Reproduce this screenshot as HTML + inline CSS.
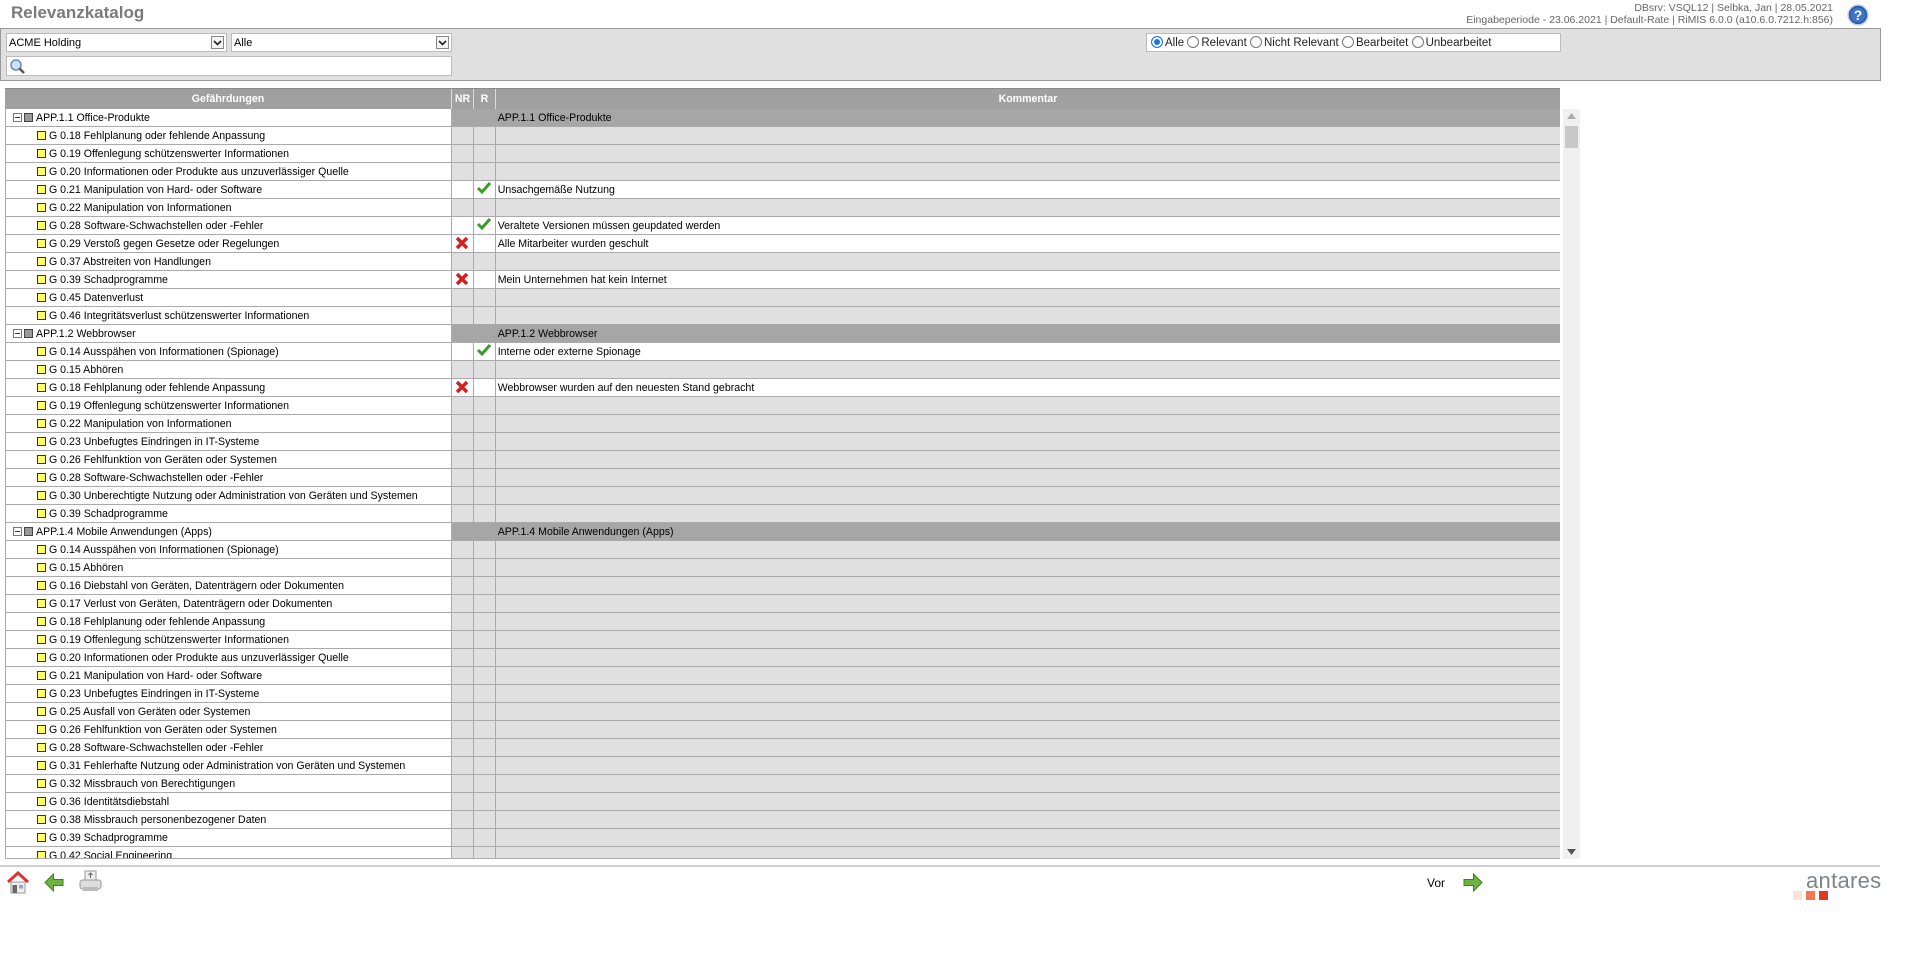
<!DOCTYPE html>
<html><head><meta charset="utf-8"><style>
*{box-sizing:border-box;margin:0;padding:0}
body{width:1920px;height:969px;background:#fff;font-family:"Liberation Sans",Arial,sans-serif;font-size:10.6px;color:#000;position:relative;overflow:hidden}
.abs{position:absolute}
#title{left:11px;top:3px;font-size:17px;font-weight:bold;color:#7a7a7a}
#info{right:87px;top:2px;text-align:right;color:#666;font-size:10.5px;line-height:12px}
#panel{left:0;top:28px;width:1881px;height:53px;background:#e0e0e0;border:1px solid #999}
.sel{position:absolute;height:19px;background:#fff;border:1px solid #bbb;font-size:11px;padding:3px 2px}
.sel .ar{position:absolute;right:2px;top:2px;width:13px;height:13px;border:1px solid #888;background:#f4f4f4}
.radios{position:absolute;left:1145px;top:4px;width:415px;height:19px;background:#fff;border:1px solid #bbb;font-size:11.5px;padding:2px 4px;white-space:nowrap;color:#222}
.rb{display:inline-block;width:12px;height:12px;border:1px solid #777;border-radius:50%;vertical-align:-2px;margin-right:2px;background:#fff}
.rb.on{border-color:#1a73e8;box-shadow:inset 0 0 0 2px #fff;background:#1a73e8}
#hdr{left:5px;top:88px;width:1555px;height:21px;background:#a0a0a0;color:#fff;font-weight:bold;display:flex;border-top:1px solid #888}
#hdr div{text-align:center;line-height:20px;border-right:1px solid #ddd}
#rows{left:5px;top:109px;width:1555px;height:750px;overflow:hidden;border-left:1px solid #aaa;border-bottom:1px solid #aaa}
.r{display:flex;height:18px;border-bottom:1px solid #aaa;line-height:19px}
.n{width:446px;background:#fff;border-right:1px solid #aaa;position:relative;white-space:nowrap}
.c{width:22px;background:#e0e0e0;border-right:1px solid #aaa;position:relative;text-align:center;line-height:17px}
.k{width:1065px;background:#e0e0e0;padding-left:2px}
.r.g .c,.r.g .k{background:#a6a6a6}
.r.g .c{border-right-color:#a6a6a6}
.r.f .c,.r.f .k{background:#fff}
.cb{position:absolute;left:31px;top:4px;width:9px;height:9px;background:#ffff66;border:1px solid #333}
.it{position:absolute;left:43px}
.pm{position:absolute;left:7px;top:4px;width:9px;height:9px;border:1px solid #777;background:#fff}
.pm:after{content:"";position:absolute;left:1px;top:3px;width:5px;height:1px;background:#333}
.gs{position:absolute;left:18px;top:4px;width:9px;height:9px;background:#999;border:1px solid #444}
.gt{position:absolute;left:30px}
#sb{left:1563px;top:109px;width:17px;height:750px;background:#f0f0f0}
#ft{left:0;top:865px;width:1880px;height:2px;background:#d0d0d0}
</style></head><body>
<div id="title" class="abs">Relevanzkatalog</div>
<div id="info" class="abs">DBsrv: VSQL12 | Selbka, Jan | 28.05.2021<br>Eingabeperiode - 23.06.2021 | Default-Rate | RiMIS 6.0.0 (a10.6.0.7212.h:856)</div>
<svg class="abs" style="left:1847px;top:4px" width="22" height="22" viewBox="0 0 22 22"><circle cx="11" cy="11" r="10" fill="#2a5aa8" stroke="#c9d6ea" stroke-width="1.5"/><circle cx="11" cy="11" r="7.5" fill="#3e74c4"/><text x="11" y="16" font-family="Liberation Sans" font-weight="bold" font-size="14" fill="#fff" text-anchor="middle">?</text></svg>
<div id="panel" class="abs">
 <div class="sel" style="left:5px;top:4px;width:221px">ACME Holding<div class="ar"><svg width="11" height="11"><path d="M2 4l3.5 3.5L9 4" stroke="#222" stroke-width="1.6" fill="none"/></svg></div></div>
 <div class="sel" style="left:230px;top:4px;width:221px">Alle<div class="ar"><svg width="11" height="11"><path d="M2 4l3.5 3.5L9 4" stroke="#222" stroke-width="1.6" fill="none"/></svg></div></div>
 <div class="sel" style="left:5px;top:27px;width:446px;height:20px"><svg style="position:absolute;left:2px;top:1px" width="17" height="17"><circle cx="7" cy="7" r="5" fill="#cfe0f4" stroke="#6a8db5" stroke-width="1.6"/><path d="M10.5 10.5l4.5 4.5" stroke="#556" stroke-width="2.5"/></svg></div>
 <div class="radios"><span class="rb on"></span>Alle <span class="rb"></span>Relevant <span class="rb"></span>Nicht Relevant <span class="rb"></span>Bearbeitet <span class="rb"></span>Unbearbeitet</div>
</div>
<div id="hdr" class="abs"><div style="width:447px">Gefährdungen</div><div style="width:22px">NR</div><div style="width:22px">R</div><div style="width:1064px;border:0">Kommentar</div></div>
<div id="rows" class="abs">
<div class="r g"><div class="n"><span class="pm"></span><span class="gs"></span><span class="gt">APP.1.1 Office-Produkte</span></div><div class="c"></div><div class="c"></div><div class="k">APP.1.1 Office-Produkte</div></div>
<div class="r"><div class="n"><span class="cb"></span><span class="it">G 0.18 Fehlplanung oder fehlende Anpassung</span></div><div class="c"></div><div class="c"></div><div class="k"></div></div>
<div class="r"><div class="n"><span class="cb"></span><span class="it">G 0.19 Offenlegung schützenswerter Informationen</span></div><div class="c"></div><div class="c"></div><div class="k"></div></div>
<div class="r"><div class="n"><span class="cb"></span><span class="it">G 0.20 Informationen oder Produkte aus unzuverlässiger Quelle</span></div><div class="c"></div><div class="c"></div><div class="k"></div></div>
<div class="r f"><div class="n"><span class="cb"></span><span class="it">G 0.21 Manipulation von Hard- oder Software</span></div><div class="c"></div><div class="c"><svg width="16" height="14"><path d="M2 7l4 4 8-9" stroke="#3a9a2a" stroke-width="3" fill="none"/></svg></div><div class="k">Unsachgemäße Nutzung</div></div>
<div class="r"><div class="n"><span class="cb"></span><span class="it">G 0.22 Manipulation von Informationen</span></div><div class="c"></div><div class="c"></div><div class="k"></div></div>
<div class="r f"><div class="n"><span class="cb"></span><span class="it">G 0.28 Software-Schwachstellen oder -Fehler</span></div><div class="c"></div><div class="c"><svg width="16" height="14"><path d="M2 7l4 4 8-9" stroke="#3a9a2a" stroke-width="3" fill="none"/></svg></div><div class="k">Veraltete Versionen müssen geupdated werden</div></div>
<div class="r f"><div class="n"><span class="cb"></span><span class="it">G 0.29 Verstoß gegen Gesetze oder Regelungen</span></div><div class="c"><svg width="16" height="16"><path d="M3 3l10 10M13 3L3 13" stroke="#d42020" stroke-width="3.5"/></svg></div><div class="c"></div><div class="k">Alle Mitarbeiter wurden geschult</div></div>
<div class="r"><div class="n"><span class="cb"></span><span class="it">G 0.37 Abstreiten von Handlungen</span></div><div class="c"></div><div class="c"></div><div class="k"></div></div>
<div class="r f"><div class="n"><span class="cb"></span><span class="it">G 0.39 Schadprogramme</span></div><div class="c"><svg width="16" height="16"><path d="M3 3l10 10M13 3L3 13" stroke="#d42020" stroke-width="3.5"/></svg></div><div class="c"></div><div class="k">Mein Unternehmen hat kein Internet</div></div>
<div class="r"><div class="n"><span class="cb"></span><span class="it">G 0.45 Datenverlust</span></div><div class="c"></div><div class="c"></div><div class="k"></div></div>
<div class="r"><div class="n"><span class="cb"></span><span class="it">G 0.46 Integritätsverlust schützenswerter Informationen</span></div><div class="c"></div><div class="c"></div><div class="k"></div></div>
<div class="r g"><div class="n"><span class="pm"></span><span class="gs"></span><span class="gt">APP.1.2 Webbrowser</span></div><div class="c"></div><div class="c"></div><div class="k">APP.1.2 Webbrowser</div></div>
<div class="r f"><div class="n"><span class="cb"></span><span class="it">G 0.14 Ausspähen von Informationen (Spionage)</span></div><div class="c"></div><div class="c"><svg width="16" height="14"><path d="M2 7l4 4 8-9" stroke="#3a9a2a" stroke-width="3" fill="none"/></svg></div><div class="k">Interne oder externe Spionage</div></div>
<div class="r"><div class="n"><span class="cb"></span><span class="it">G 0.15 Abhören</span></div><div class="c"></div><div class="c"></div><div class="k"></div></div>
<div class="r f"><div class="n"><span class="cb"></span><span class="it">G 0.18 Fehlplanung oder fehlende Anpassung</span></div><div class="c"><svg width="16" height="16"><path d="M3 3l10 10M13 3L3 13" stroke="#d42020" stroke-width="3.5"/></svg></div><div class="c"></div><div class="k">Webbrowser wurden auf den neuesten Stand gebracht</div></div>
<div class="r"><div class="n"><span class="cb"></span><span class="it">G 0.19 Offenlegung schützenswerter Informationen</span></div><div class="c"></div><div class="c"></div><div class="k"></div></div>
<div class="r"><div class="n"><span class="cb"></span><span class="it">G 0.22 Manipulation von Informationen</span></div><div class="c"></div><div class="c"></div><div class="k"></div></div>
<div class="r"><div class="n"><span class="cb"></span><span class="it">G 0.23 Unbefugtes Eindringen in IT-Systeme</span></div><div class="c"></div><div class="c"></div><div class="k"></div></div>
<div class="r"><div class="n"><span class="cb"></span><span class="it">G 0.26 Fehlfunktion von Geräten oder Systemen</span></div><div class="c"></div><div class="c"></div><div class="k"></div></div>
<div class="r"><div class="n"><span class="cb"></span><span class="it">G 0.28 Software-Schwachstellen oder -Fehler</span></div><div class="c"></div><div class="c"></div><div class="k"></div></div>
<div class="r"><div class="n"><span class="cb"></span><span class="it">G 0.30 Unberechtigte Nutzung oder Administration von Geräten und Systemen</span></div><div class="c"></div><div class="c"></div><div class="k"></div></div>
<div class="r"><div class="n"><span class="cb"></span><span class="it">G 0.39 Schadprogramme</span></div><div class="c"></div><div class="c"></div><div class="k"></div></div>
<div class="r g"><div class="n"><span class="pm"></span><span class="gs"></span><span class="gt">APP.1.4 Mobile Anwendungen (Apps)</span></div><div class="c"></div><div class="c"></div><div class="k">APP.1.4 Mobile Anwendungen (Apps)</div></div>
<div class="r"><div class="n"><span class="cb"></span><span class="it">G 0.14 Ausspähen von Informationen (Spionage)</span></div><div class="c"></div><div class="c"></div><div class="k"></div></div>
<div class="r"><div class="n"><span class="cb"></span><span class="it">G 0.15 Abhören</span></div><div class="c"></div><div class="c"></div><div class="k"></div></div>
<div class="r"><div class="n"><span class="cb"></span><span class="it">G 0.16 Diebstahl von Geräten, Datenträgern oder Dokumenten</span></div><div class="c"></div><div class="c"></div><div class="k"></div></div>
<div class="r"><div class="n"><span class="cb"></span><span class="it">G 0.17 Verlust von Geräten, Datenträgern oder Dokumenten</span></div><div class="c"></div><div class="c"></div><div class="k"></div></div>
<div class="r"><div class="n"><span class="cb"></span><span class="it">G 0.18 Fehlplanung oder fehlende Anpassung</span></div><div class="c"></div><div class="c"></div><div class="k"></div></div>
<div class="r"><div class="n"><span class="cb"></span><span class="it">G 0.19 Offenlegung schützenswerter Informationen</span></div><div class="c"></div><div class="c"></div><div class="k"></div></div>
<div class="r"><div class="n"><span class="cb"></span><span class="it">G 0.20 Informationen oder Produkte aus unzuverlässiger Quelle</span></div><div class="c"></div><div class="c"></div><div class="k"></div></div>
<div class="r"><div class="n"><span class="cb"></span><span class="it">G 0.21 Manipulation von Hard- oder Software</span></div><div class="c"></div><div class="c"></div><div class="k"></div></div>
<div class="r"><div class="n"><span class="cb"></span><span class="it">G 0.23 Unbefugtes Eindringen in IT-Systeme</span></div><div class="c"></div><div class="c"></div><div class="k"></div></div>
<div class="r"><div class="n"><span class="cb"></span><span class="it">G 0.25 Ausfall von Geräten oder Systemen</span></div><div class="c"></div><div class="c"></div><div class="k"></div></div>
<div class="r"><div class="n"><span class="cb"></span><span class="it">G 0.26 Fehlfunktion von Geräten oder Systemen</span></div><div class="c"></div><div class="c"></div><div class="k"></div></div>
<div class="r"><div class="n"><span class="cb"></span><span class="it">G 0.28 Software-Schwachstellen oder -Fehler</span></div><div class="c"></div><div class="c"></div><div class="k"></div></div>
<div class="r"><div class="n"><span class="cb"></span><span class="it">G 0.31 Fehlerhafte Nutzung oder Administration von Geräten und Systemen</span></div><div class="c"></div><div class="c"></div><div class="k"></div></div>
<div class="r"><div class="n"><span class="cb"></span><span class="it">G 0.32 Missbrauch von Berechtigungen</span></div><div class="c"></div><div class="c"></div><div class="k"></div></div>
<div class="r"><div class="n"><span class="cb"></span><span class="it">G 0.36 Identitätsdiebstahl</span></div><div class="c"></div><div class="c"></div><div class="k"></div></div>
<div class="r"><div class="n"><span class="cb"></span><span class="it">G 0.38 Missbrauch personenbezogener Daten</span></div><div class="c"></div><div class="c"></div><div class="k"></div></div>
<div class="r"><div class="n"><span class="cb"></span><span class="it">G 0.39 Schadprogramme</span></div><div class="c"></div><div class="c"></div><div class="k"></div></div>
<div class="r"><div class="n"><span class="cb"></span><span class="it">G 0.42 Social Engineering</span></div><div class="c"></div><div class="c"></div><div class="k"></div></div>
</div>
<div id="sb" class="abs">
 <svg style="position:absolute;left:4px;top:4px" width="9" height="6"><path d="M0 6L4.5 0 9 6z" fill="#aaa"/></svg>
 <div style="position:absolute;left:2px;top:17px;width:13px;height:22px;background:#c8c8c8"></div>
 <svg style="position:absolute;left:4px;top:740px" width="9" height="6"><path d="M0 0L4.5 6 9 0z" fill="#555"/></svg>
</div>
<div id="ft" class="abs"></div>
<svg class="abs" style="left:7px;top:871px" width="22" height="23" viewBox="0 0 22 23"><path d="M1 11L11 2l10 9" stroke="#d33" stroke-width="3" fill="none"/><rect x="4" y="11" width="14" height="11" fill="#eee" stroke="#999"/><rect x="5.5" y="14" width="4.5" height="8" fill="#666"/><rect x="12" y="14" width="4" height="3.5" fill="#8ab"/></svg>
<svg class="abs" style="left:44px;top:873px" width="21" height="19" viewBox="0 0 21 19"><path d="M1 9.5L9.5 1v5.5H19v6H9.5V18z" fill="#6cb33f" stroke="#3f7f22"/></svg>
<svg class="abs" style="left:79px;top:870px" width="23" height="23" viewBox="0 0 23 23"><rect x="6" y="1" width="11" height="10" fill="#eee" stroke="#999"/><path d="M11.5 3v5M9.5 5l2-2 2 2" stroke="#666" fill="none"/><rect x="1" y="10" width="21" height="9" rx="2.5" fill="#ddd" stroke="#999"/><rect x="4" y="17" width="15" height="4" fill="#bbb"/></svg>
<div class="abs" style="left:1427px;top:876px;font-size:12px">Vor</div>
<svg class="abs" style="left:1462px;top:873px" width="21" height="19" viewBox="0 0 21 19"><path d="M20 9.5L11.5 1v5.5H2v6h9.5V18z" fill="#6cb33f" stroke="#3f7f22"/></svg>
<div class="abs" style="left:1806px;top:868px;font-size:22px;color:#7e8487;letter-spacing:0.3px">antares</div>
<div class="abs" style="left:1793px;top:891px;width:9px;height:9px;background:#fbe3d8"></div>
<div class="abs" style="left:1806px;top:891px;width:9px;height:9px;background:#ec7a55"></div>
<div class="abs" style="left:1819px;top:891px;width:9px;height:9px;background:#e03a20"></div>
</body></html>
